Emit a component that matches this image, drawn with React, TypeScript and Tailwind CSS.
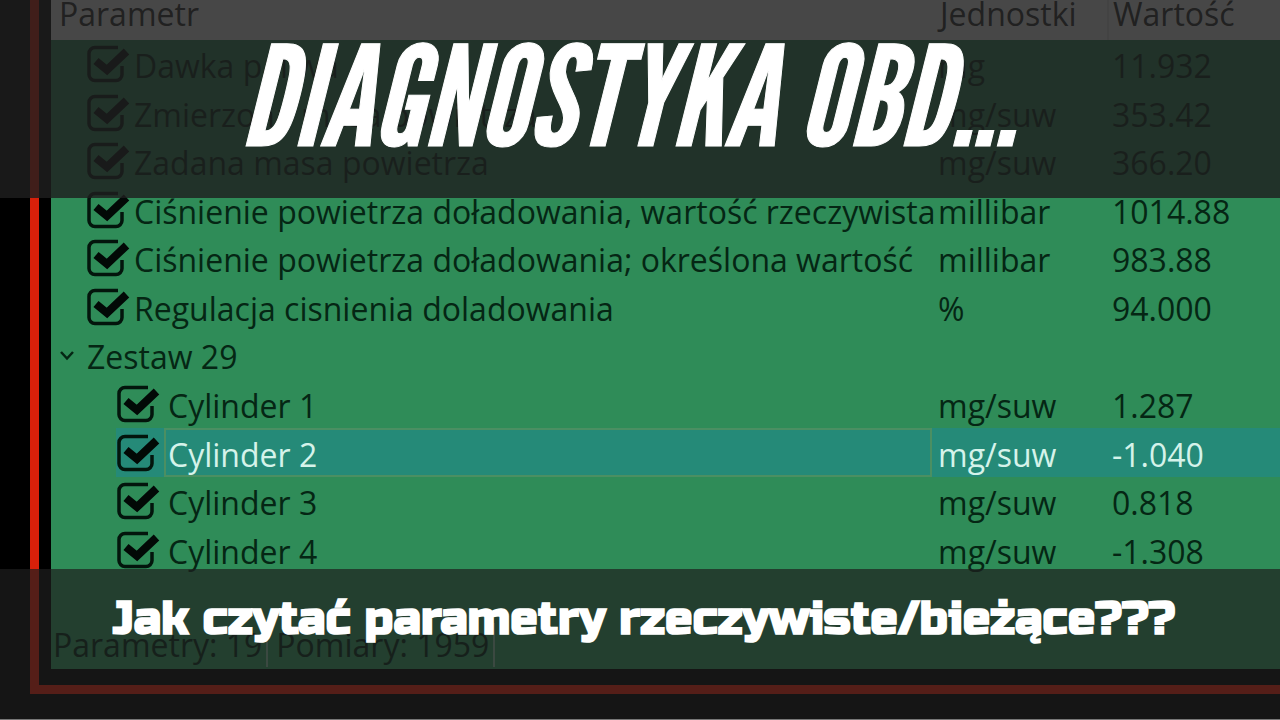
import React from "react";

type Row = { name: string; unit: string; value: string; child?: boolean; selected?: boolean };

const readings: Row[] = [
  { name: "Dawka paliwa", unit: "mg", value: "11.932" },
  { name: "Zmierzona masa powietrza", unit: "mg/suw", value: "353.42" },
  { name: "Zadana masa powietrza", unit: "mg/suw", value: "366.20" },
  { name: "Ciśnienie powietrza doładowania, wartość rzeczywista", unit: "millibar", value: "1014.88" },
  { name: "Ciśnienie powietrza doładowania; określona wartość", unit: "millibar", value: "983.88" },
  { name: "Regulacja cisnienia doladowania", unit: "%", value: "94.000" },
];

const cylinders: Row[] = [
  { name: "Cylinder 1", unit: "mg/suw", value: "1.287", child: true },
  { name: "Cylinder 2", unit: "mg/suw", value: "-1.040", child: true, selected: true },
  { name: "Cylinder 3", unit: "mg/suw", value: "0.818", child: true },
  { name: "Cylinder 4", unit: "mg/suw", value: "-1.308", child: true },
];

function ReadingRow({ name, unit, value, child, selected }: Row) {
  return (
    <tr className={selected ? "text-[#d5f3ea]" : ""}>
      <td className={child ? "p-0 pl-[65px]" : "p-0 pl-[35px]"}>
        <label className={selected ? "flex h-full items-center bg-[#258a78]" : "flex h-full items-center"}>
          <span className="relative h-[38px] w-[44px] shrink-0">
            <input type="checkbox" defaultChecked className="absolute inset-0 m-0 h-full w-full appearance-none" />
            <svg viewBox="0 0 44 38" fill="none" className="pointer-events-none absolute inset-0 text-[#03150c]">
              <path d="M32 2.5H9a6 6 0 0 0-6 6v21a6 6 0 0 0 6 6h21a6 6 0 0 0 6-6V21" stroke="currentColor" strokeWidth="3.5" />
              <path d="M10 16L21 25L40.5 6.5" stroke="#020906" strokeWidth="8" />
            </svg>
          </span>
          <span
            className={
              selected
                ? "ml-1 flex h-full grow items-center pt-1 pl-1 whitespace-nowrap ring-2 ring-[#4b8f62] ring-inset"
                : child
                  ? "ml-2 grow pt-1 whitespace-nowrap"
                  : "ml-1 grow pt-1 whitespace-nowrap"
            }
          >
            {name}
          </span>
        </label>
      </td>
      <td className={selected ? "bg-[#258a78] p-0 pt-1 pl-[6px]" : "p-0 pt-1 pl-[6px]"}>{unit}</td>
      <td className={selected ? "bg-[#258a78] p-0 pt-1 pl-1" : "p-0 pt-1 pl-1"}>{value}</td>
    </tr>
  );
}

export default function App() {
  return (
    <main className="grid min-h-screen overflow-hidden border-b border-[#777] bg-black font-['Open_Sans','Noto_Sans',sans-serif] text-[32px] leading-[44px] text-[#052614]">
      <div className="col-start-1 row-start-1 flex flex-col pb-[25px] pl-[30px]">
        <section className="flex grow flex-col border-b-9 border-l-9 border-[#d8200a] pb-4 pl-3">
          <div className="flex grow flex-col bg-[#2f8c58]">
            <table className="h-[574px] w-full table-fixed border-collapse text-left">
              <colgroup>
                <col />
                <col className="w-[176px]" />
                <col className="w-[172px]" />
              </colgroup>
              <thead className="bg-white text-[#2c2c2c]">
                <tr className="h-10">
                  <th className="h-10 p-0 pl-2 font-normal"><span className="-mt-4 block h-10">Parametr</span></th>
                  <th className="h-10 p-0 pl-2 font-normal"><span className="-mt-4 block h-10">Jednostki</span></th>
                  <th className="h-10 border-l-2 border-[#eaeaea] p-0 pl-1 font-normal"><span className="-mt-4 block h-10">Wartość</span></th>
                </tr>
              </thead>
              <tbody>
                {readings.map((r) => <ReadingRow key={r.name} {...r} />)}
                <tr>
                  <td className="p-0 pt-1 pl-2" colSpan={3}>
                    <button type="button" className="flex items-center gap-3">
                      <svg width="16" height="12" viewBox="0 0 16 12" fill="none" stroke="currentColor" strokeWidth="2.5">
                        <path d="M2 1L8 7.5L14 1" />
                      </svg>
                      Zestaw 29
                    </button>
                  </td>
                </tr>
                {cylinders.map((r) => <ReadingRow key={r.name} {...r} />)}
              </tbody>
            </table>
            <footer className="mt-auto flex pb-[2px]">
              <span className="border-r-2 border-[#7fae93] pr-1 pl-[2px]">Parametry: 19</span>
              <span className="border-r-2 border-[#7fae93] pr-1 pl-2">Pomiary: 1959</span>
            </footer>
          </div>
        </section>
      </div>
      <div className="z-10 col-start-1 row-start-1 flex flex-col justify-between text-center text-white">
        <header className="flex h-[198px] items-center justify-center bg-[#1f1f1f]/82 pr-6 pb-2">
          <h1 className="font-['League_Gothic','Bebas_Neue',sans-serif] text-[139px] leading-none font-normal whitespace-nowrap italic [-webkit-text-stroke:1px_white]">
            DIAGNOSTYKA OBD...
          </h1>
        </header>
        <div className="flex h-[150px] justify-center bg-[#1e1e1e]/70 pt-6 pl-2">
          <h2 className="font-['Russo_One','Inter',sans-serif] text-[46px] leading-[52px] font-black whitespace-nowrap">
            Jak czytać parametry rzeczywiste/bieżące???
          </h2>
        </div>
      </div>
    </main>
  );
}
